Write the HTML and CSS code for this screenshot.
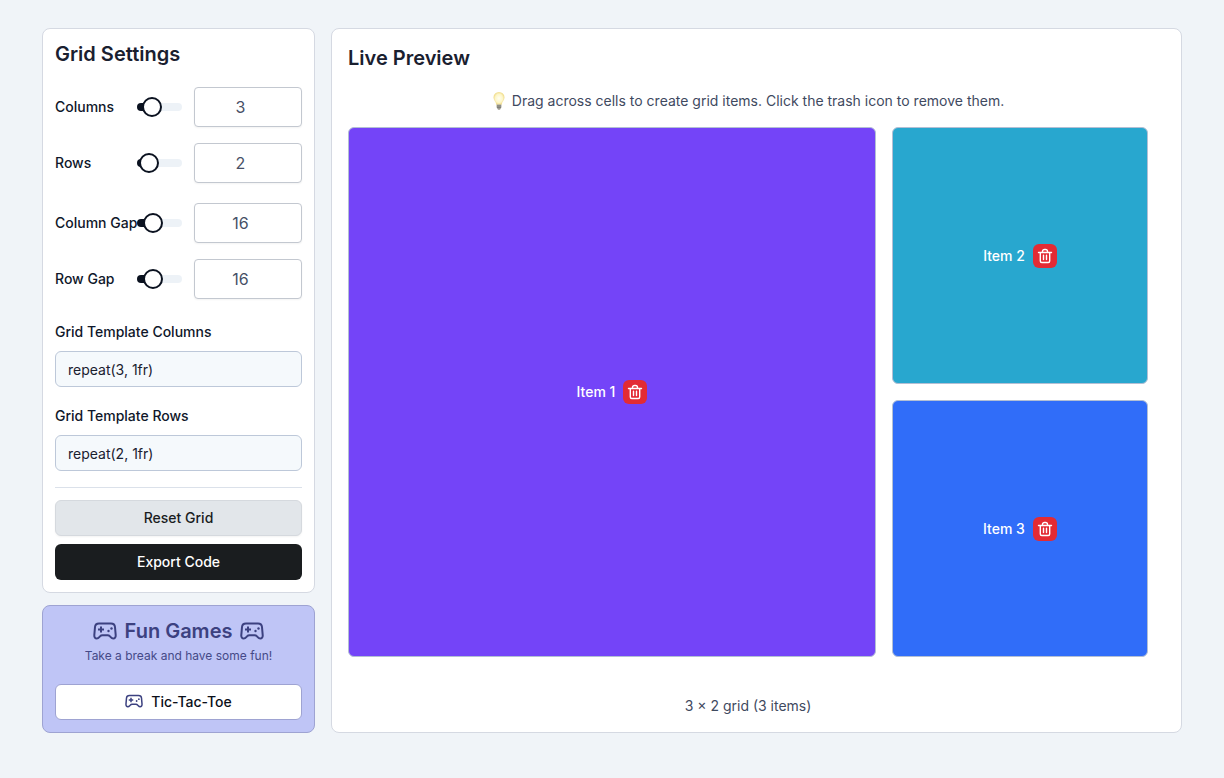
FILE: index.html
```html
<!DOCTYPE html>
<html lang="en">
<head>
    <meta charset="UTF-8">
    <meta name="viewport" content="width=device-width, initial-scale=1.0">
    <title>Grid Generator</title>
    <link rel="stylesheet" href="styles.css">
</head>
<body>
    <!-- Shared icons -->
    <svg class="icon-defs" aria-hidden="true">
        <symbol id="icon-gamepad" viewBox="0 0 24 18">
            <path d="M6 1.500h12c2.400 0 3.800 1.300 4 3.500l.7 8.200c.2 2-.9 3.300-2.500 3.300-1.100 0-1.800-.5-2.500-1.300l-.9-1c-.6-.7-1.200-1-2.200-1H9.400c-1 0-1.600.3-2.200 1l-.9 1c-.7.8-1.400 1.300-2.500 1.300-1.600 0-2.700-1.300-2.500-3.300L2 5c.2-2.200 1.600-3.500 4-3.500z" fill="none" stroke="currentColor" stroke-width="2" stroke-linejoin="round"/>
            <path d="M8 4.500v6M5 7.500h6" fill="none" stroke="currentColor" stroke-width="2"/>
            <circle cx="15.500" cy="9" r="1.200" fill="currentColor"/>
            <circle cx="18.500" cy="6.500" r="1.200" fill="currentColor"/>
        </symbol>
        <symbol id="icon-trash" viewBox="0 0 16 16">
            <path d="M1.500 4.500h13M5.500 4.300v-.8a2 2 0 0 1 2-2h1a2 2 0 0 1 2 2v.8M3.300 4.500v8.500a1.500 1.500 0 0 0 1.500 1.500h6.400a1.500 1.500 0 0 0 1.500-1.500V4.500M6.500 7.200v4.300M9.500 7.200v4.300" fill="none" stroke="currentColor" stroke-width="1.400" stroke-linecap="round" stroke-linejoin="round"/>
        </symbol>
    </svg>

    <main class="layout">
        <aside class="sidebar">
            <section class="card settings">
                <h2>Grid Settings</h2>

                <div class="controls">
                    <div class="control">
                        <label for="columns">Columns</label>
                        <input type="range" class="slider" min="1" max="12" value="3" style="--fill: 18%" aria-label="Columns slider">
                        <input type="number" class="number" id="columns" min="1" max="12" value="3">
                    </div>
                    <div class="control">
                        <label for="rows">Rows</label>
                        <input type="range" class="slider" min="1" max="12" value="2" style="--fill: 9%" aria-label="Rows slider">
                        <input type="number" class="number" id="rows" min="1" max="12" value="2">
                    </div>
                </div>

                <div class="controls">
                    <div class="control">
                        <label for="columnGap">Column Gap</label>
                        <input type="range" class="slider" min="0" max="64" value="16" style="--fill: 25%" aria-label="Column gap slider">
                        <input type="number" class="number" id="columnGap" min="0" max="64" value="16">
                    </div>
                    <div class="control">
                        <label for="rowGap">Row Gap</label>
                        <input type="range" class="slider" min="0" max="64" value="16" style="--fill: 25%" aria-label="Row gap slider">
                        <input type="number" class="number" id="rowGap" min="0" max="64" value="16">
                    </div>
                </div>

                <div class="templates">
                    <div class="field">
                        <label for="templateColumns">Grid Template Columns</label>
                        <input type="text" id="templateColumns" value="repeat(3, 1fr)">
                    </div>
                    <div class="field">
                        <label for="templateRows">Grid Template Rows</label>
                        <input type="text" id="templateRows" value="repeat(2, 1fr)">
                    </div>
                </div>

                <div class="actions">
                    <button class="btn btn-reset" id="resetButton">Reset Grid</button>
                    <button class="btn btn-export" id="exportButton">Export Code</button>
                </div>
            </section>

            <section class="card games">
                <h2>
                    <svg class="icon-lg" aria-hidden="true"><use href="#icon-gamepad"/></svg>
                    Fun Games
                    <svg class="icon-lg" aria-hidden="true"><use href="#icon-gamepad"/></svg>
                </h2>
                <p>Take a break and have some fun!</p>
                <button class="btn btn-game" id="ticTacToeButton">
                    <svg class="icon-md" aria-hidden="true"><use href="#icon-gamepad"/></svg>
                    Tic-Tac-Toe
                </button>
            </section>
        </aside>

        <section class="card preview">
            <h2>Live Preview</h2>
            <div class="preview-body">
                <p class="hint">
                    <svg class="bulb" viewBox="0 0 14 18" aria-hidden="true">
                        <defs>
                            <radialGradient id="glow" cx="50%" cy="50%" r="55%">
                                <stop offset="0" stop-color="#fffef2"/>
                                <stop offset="0.6" stop-color="#fdf6c8"/>
                                <stop offset="1" stop-color="#ecd377"/>
                            </radialGradient>
                        </defs>
                        <path d="M7 0a5.500 5.500 0 0 0-5.500 5.500c0 2.700 2.300 4 2.900 7.200h5.200c.6-3.200 2.900-4.500 2.900-7.200A5.500 5.500 0 0 0 7 0z" fill="url(#glow)"/>
                        <path d="M4.700 12.400h4.600v2.900L8 17.800H6l-1.300-2.500z" fill="#a3a196"/>
                        <path d="M4.700 14h4.600M5 15.600h4" stroke="#6f6e68" stroke-width=".7"/>
                    </svg>
                    Drag across cells to create grid items. Click the trash icon to remove them.
                </p>

                <div class="grid">
                    <div class="item item-1">
                        <span>Item 1</span>
                        <button class="remove" aria-label="Remove item 1"><svg aria-hidden="true"><use href="#icon-trash"/></svg></button>
                    </div>
                    <div class="item item-2">
                        <span>Item 2</span>
                        <button class="remove" aria-label="Remove item 2"><svg aria-hidden="true"><use href="#icon-trash"/></svg></button>
                    </div>
                    <div class="item item-3">
                        <span>Item 3</span>
                        <button class="remove" aria-label="Remove item 3"><svg aria-hidden="true"><use href="#icon-trash"/></svg></button>
                    </div>
                </div>

                <p class="summary">3 × 2 grid (3 items)</p>
            </div>
        </section>
    </main>
</body>
</html>
```
FILE: styles.css
```css
/* Basic styling */
* {
    box-sizing: border-box;
}
body {
    margin: 0;
    padding: 28px 42px;
    font-family: Inter, "Liberation Sans", sans-serif;
    font-size: 14px;
    line-height: 20px;
    color: #0f172a;
    background-color: #f0f4f8;
}
h2, p {
    margin: 0;
}
h2 {
    font-size: 20px;
    line-height: 26px;
    font-weight: 600;
    color: #1a202f;
}
input, button {
    font-family: inherit;
}
label {
    font-weight: 500;
    white-space: nowrap;
}
.icon-defs {
    display: none;
}

/* Page layout */
.layout {
    display: grid;
    grid-template-columns: 273px minmax(0, 1fr);
    gap: 16px;
}
.sidebar {
    display: flex;
    flex-direction: column;
    gap: 12px;
}
.card {
    padding: 12px;
    background-color: white;
    border: 1px solid #d5d9e2;
    border-radius: 8px;
}

/* Settings */
.controls {
    display: flex;
    flex-direction: column;
    gap: 16px;
    margin-top: 20px;
}
.control {
    display: grid;
    grid-template-columns: 82px minmax(0, 1fr) 108px;
    align-items: center;
}
.slider {
    appearance: none;
    -webkit-appearance: none;
    height: 20px;
    margin: 0 12px 0 0;
    min-width: 0;
    background: transparent;
}
.slider::-webkit-slider-runnable-track {
    height: 8px;
    border-radius: 4px;
    background: linear-gradient(to right, #0b1220 calc(var(--fill) + 6px), #edf2f7 0);
}
.slider::-webkit-slider-thumb {
    -webkit-appearance: none;
    width: 20px;
    height: 20px;
    margin-top: -6px;
    border: 2px solid #0b1220;
    border-radius: 50%;
    background-color: white;
}
.number {
    width: 100%;
    height: 40px;
    padding: 0 12px;
    border: 1px solid #c3c8d0;
    border-radius: 4px;
    font-size: 16px;
    text-align: center;
    color: #475066;
    background-color: white;
    box-shadow: 0 1px 2px rgba(0, 0, 0, 0.05);
}
.templates {
    display: flex;
    flex-direction: column;
    gap: 20px;
    margin-top: 24px;
    padding-bottom: 16px;
    border-bottom: 1px solid #dbe1ea;
}
.field {
    display: flex;
    flex-direction: column;
    gap: 10px;
}
.field label {
    line-height: 18px;
}
.field input {
    width: 100%;
    height: 36px;
    padding: 0 12px;
    border: 1px solid #bdc8d9;
    border-radius: 6px;
    font-size: 14px;
    color: #1a202f;
    background-color: #f5f9fc;
}

/* Buttons */
.actions {
    display: flex;
    flex-direction: column;
    gap: 8px;
    margin-top: 12px;
}
.btn {
    display: flex;
    align-items: center;
    justify-content: center;
    gap: 8px;
    width: 100%;
    height: 36px;
    padding: 0 12px 2px;
    border: 1px solid transparent;
    border-radius: 6px;
    font-size: 14px;
    font-weight: 500;
    cursor: pointer;
}
.btn-reset {
    color: #1a1d1f;
    background-color: #e2e6ea;
    border-color: #d5d9de;
    box-shadow: 0 1px 2px rgba(0, 0, 0, 0.05);
}
.btn-export {
    color: white;
    background-color: #1a1d1f;
}

/* Games */
.games {
    background-color: #bfc5f6;
    border-color: #9ea3d2;
    text-align: center;
    color: #454a88;
}
.games h2 {
    display: flex;
    align-items: center;
    justify-content: center;
    gap: 8px;
    color: #3c4180;
}
.games p {
    margin: 4px 0 20px;
    font-size: 12px;
    line-height: 16px;
}
.btn-game {
    color: #0b0f19;
    background-color: white;
    border-color: #9ea3d2;
}
.icon-lg {
    width: 24px;
    height: 18px;
}
.icon-md {
    width: 18px;
    height: 14px;
    color: #3c4180;
}

/* Preview */
.preview {
    padding: 16px;
}
.preview-body {
    max-width: 800px;
    text-align: center;
    color: #3f4a5f;
}
.hint {
    display: flex;
    align-items: center;
    justify-content: center;
    gap: 6px;
    margin: 20px 0 16px;
}
.bulb {
    width: 14px;
    height: 18px;
}
.grid {
    display: grid;
    grid-template-columns: repeat(3, 1fr);
    grid-template-rows: repeat(2, 1fr);
    gap: 16px;
    aspect-ratio: 800 / 530;
}
.item {
    display: flex;
    align-items: center;
    justify-content: center;
    gap: 8px;
    border: 1px solid #b3bfd4;
    border-radius: 6px;
    font-weight: 500;
    color: white;
}
.item-1 {
    grid-column: 1 / 3;
    grid-row: 1 / 3;
    background-color: #7444f8;
}
.item-2 {
    background-color: #28a7cf;
}
.item-3 {
    background-color: #306df9;
}
.remove {
    display: flex;
    align-items: center;
    justify-content: center;
    width: 24px;
    height: 24px;
    padding: 0;
    border: none;
    border-radius: 6px;
    color: white;
    background-color: #e32b34;
    cursor: pointer;
}
.remove svg {
    width: 16px;
    height: 16px;
}
.summary {
    margin-top: 39px;
}
```
